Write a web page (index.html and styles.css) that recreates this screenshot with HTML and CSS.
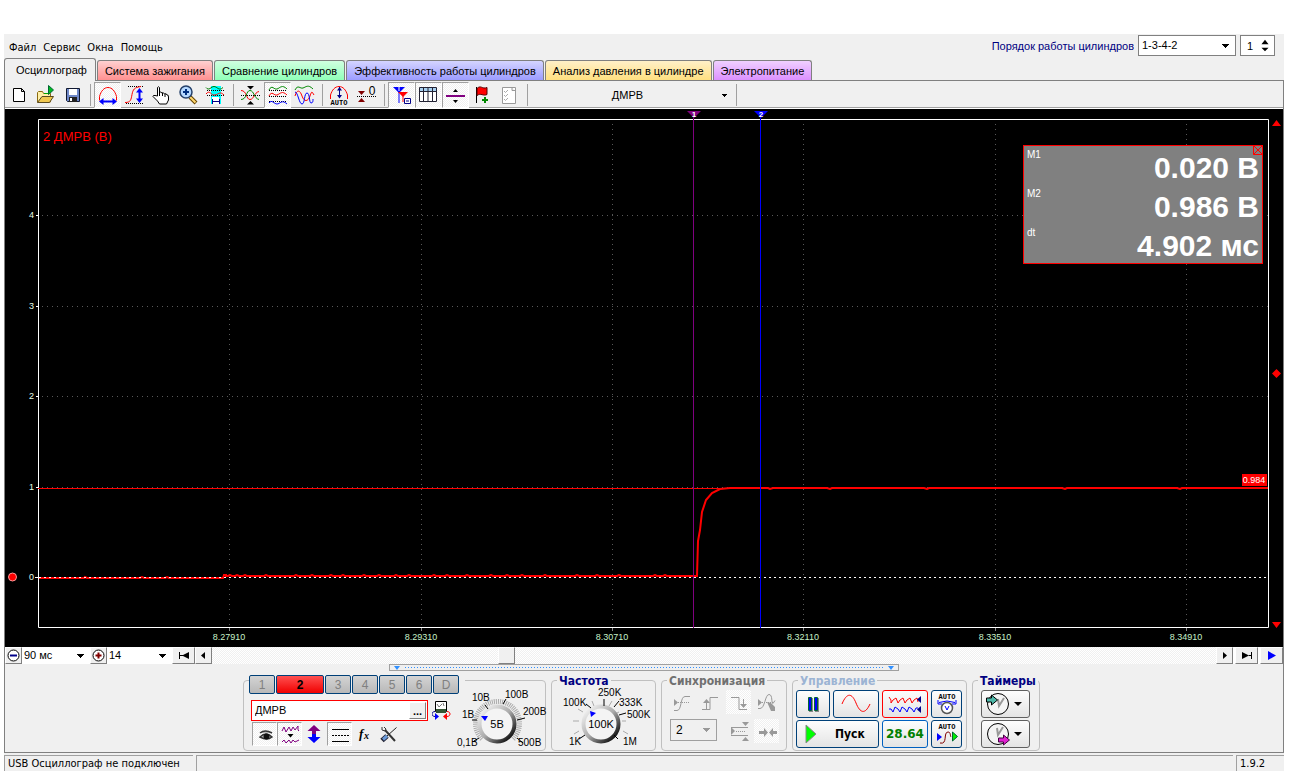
FILE: index.html
```html
<!DOCTYPE html>
<html lang="ru">
<head>
<meta charset="utf-8">
<title>USB Осциллограф</title>
<link rel="stylesheet" href="styles.css">
</head>
<body>
<main class="window">
  <header class="menubar">
    <nav class="menu">
      <button>Файл</button><button>Сервис</button><button>Окна</button><button>Помощь</button>
    </nav>
    <div class="order">
      <label for="order">Порядок работы цилиндров</label>
      <select id="order" class="order-select"><option>1-3-4-2</option></select>
      <div class="spin">
        <input type="text" value="1" aria-label="Номер цилиндра">
        <svg width="9" height="16" viewBox="0 0 9 16"><path d="M4.500 1 8.500 6H.5zM.5 10h8l-4 4z"/></svg>
      </div>
    </div>
  </header>

  <nav class="tabs">
    <button class="tab active">Осциллограф</button>
    <button class="tab red">Система зажигания</button>
    <button class="tab green">Сравнение цилиндров</button>
    <button class="tab blue">Эффективность работы цилиндров</button>
    <button class="tab yellow">Анализ давления в цилиндре</button>
    <button class="tab violet">Электропитание</button>
  </nav>

  <section class="page">
    <div class="toolbar">
      <button class="tool" aria-label="Новый"><svg viewBox="0 0 24 24"><path d="M6.500 5.500h8l3 3v10h-11zM14.500 5.500v3h3" fill="#fff" stroke="#000"/></svg></button>
      <button class="tool" aria-label="Открыть"><svg viewBox="0 0 24 24"><path d="M3.500 19V9.500l1-1h4l1 2h7V19z" fill="#fff0a8" stroke="#8a6a10"/><path d="M3.500 19.500 8 13.500h11.500l-4 6z" fill="#f0c850" stroke="#5a4a20"/><path d="M10 10.500h4" stroke="#0a0"/><path d="M14.500 2.500v9l5-4.500z" fill="#0b2" stroke="#063"/></svg></button>
      <button class="tool" aria-label="Сохранить"><svg viewBox="0 0 24 24"><path d="M5.500 5.500h13v13h-12l-1-1z" fill="#6f88c8" stroke="#101830"/><path d="M8 6h8v6H8z" fill="#fff"/><path d="M8 14h8v5H8z" fill="#222"/><path d="M9 15h2v3H9z" fill="#fff"/></svg></button>
      <i class="sep"></i>
      <button class="tool on" aria-label="Развертка"><svg viewBox="0 0 24 24" fill="none"><path d="M3.500 17.500v-4C5 8 8 4.500 12 4.500s7 3.500 8.500 9v4" stroke="red"/><path d="M5 18.500h14" stroke="#00f" stroke-width="2"/><path d="M7.500 15v7L3 18.500zM16.500 15v7l4.500-3.500z" fill="#00f"/></svg></button>
      <button class="tool" aria-label="Усиление"><svg viewBox="0 0 24 24" fill="none"><path d="M5 3.500h15M3 20.500h17" stroke="#000" stroke-dasharray="1 1"/><path d="M2 19.500c6 0 6-3 7-8s2-7 9-8" stroke="red"/><path d="M16.500 7v11" stroke="#00f" stroke-width="2"/><path d="M13 9.500h7L16.500 5zM13 15.500h7L16.500 20z" fill="#00f"/></svg></button>
      <button class="tool" aria-label="Рука"><svg viewBox="0 0 24 24"><path d="M7.500 13V4.500q1-1.500 2 0V10q1-2 2.500 0 1.500-1 2.500 1 2-1 2.500 1 1.500-.5 1.500 2v3l-2 4h-7l-2-3-4.500-4.500q0-1.500 2-1z" fill="#fff" stroke="#000"/><path d="M9.500 9v4M12.500 10v3M15 11v3" stroke="#000"/></svg></button>
      <button class="tool" aria-label="Лупа"><svg viewBox="0 0 24 24"><path d="m13 14 6 6" stroke="#664400" stroke-width="4"/><path d="m13 14 5.500 5.500" stroke="#ffd870" stroke-width="2"/><circle cx="9" cy="9" r="6" fill="#b4d8ff" stroke="#24406a" stroke-width="1.500"/><path d="M9 6v6M6 9h6" stroke="#003080" stroke-width="2"/></svg></button>
      <button class="tool" aria-label="Участок"><svg viewBox="0 0 24 24" fill="none"><path d="M7 3h10v18H7z" fill="#0ff"/><path d="M8 14h7v7H8z" fill="#fff"/><path d="M2 4.500c3 4 5-1 8-1s5 5 9 1" stroke="#007a00"/><path d="M3 7.500h18M3 12.500h18" stroke="#000" stroke-dasharray="1 1"/><path d="M2 11c4-5 5 2 9 1s5-4 9 0" stroke="red"/><path d="M8.500 16v5M15.500 16v5M9 18.500h7" stroke="#008"/></svg></button>
      <i class="sep"></i>
      <button class="tool" aria-label="Совместить"><svg viewBox="0 0 24 24" fill="none"><path d="M2 12.500h19" stroke="#000" stroke-dasharray="1 1"/><path d="M2 7.500c6 0 5 9 9 9s4-7 9-8" stroke="red"/><path d="M2 16.500c6 0 5-9 9-9s4 8 9 9" stroke="#080"/><path d="M8 3h7l-3.500 3.500zM8 21.500h7L11.500 18z" fill="#000"/></svg></button>
      <button class="tool on" aria-label="Разнести"><svg viewBox="0 0 24 24" fill="none"><path d="M3 7.500h18M3 13.500h18M3 18.500h18" stroke="#000" stroke-dasharray="1 1"/><path d="M3 7c3-6 5 0 8-1s5-5 10 0" stroke="#080"/><path d="M3 13c3-6 5 0 8-1s5-5 10 0" stroke="red"/><path d="M3 20c3-4 5 1 8 1s5-5 10 0" stroke="#00f"/></svg></button>
      <button class="tool" aria-label="Наложить"><svg viewBox="0 0 24 24" fill="none"><path d="M2 7c3-6 5-1 8-2s5-4 10 1" stroke="#080"/><path d="M2 13c2-7 5-6 7 0s6 6 8 0 2-4 4-1" stroke="red"/><path d="M2 9c3 0 4 12 7 12s2-11 5-11 2 10 4 10 2-2 2-4" stroke="#00f"/></svg></button>
      <i class="sep"></i>
      <button class="tool" aria-label="Авто"><svg viewBox="0 0 24 24" fill="none"><path d="M2.500 16v-4C4 7 7 3.500 11 3.500S18 7 19.500 12v4" stroke="red"/><path d="M11.500 4v11" stroke="#008"/><path d="M9 7.500h5L11.500 4zM9 12h5l-2.500 3.500z" fill="#008"/><text x="11" y="22" class="tiny">AUTO</text></svg></button>
      <button class="tool" aria-label="Ноль"><svg viewBox="0 0 24 24"><path d="M2 13.500h19" stroke="#000" stroke-dasharray="1 1"/><path d="M3 8h7l-3.500 4zM3 19h7l-3.500-4z" fill="#800000"/><text x="17" y="12" class="zero">0</text></svg></button>
      <i class="sep"></i>
      <button class="tool on" aria-label="Маркеры"><svg viewBox="0 0 24 24"><path d="M3 4h12l-6 6z" fill="#00f"/><path d="M9 9v11" stroke="#00f"/><path d="M8 9h10l-5 5z" fill="red"/><path d="M13 13v6" stroke="red"/><path d="M9 4v4" stroke="#fff"/><path d="M14.500 15.500h6v5h-6z" fill="#fff" stroke="#008"/><path d="M16 18h3" stroke="#008"/></svg></button>
      <button class="tool on" aria-label="Таблица"><svg viewBox="0 0 24 24"><path d="M2.500 4.500h17v14h-17z" fill="#fff" stroke="#223"/><path d="M3 5h16v4H3z" fill="#a8d0f0"/><path d="M3 8.500h16M6.500 5v13M11 5v13M15.500 5v13" stroke="#223"/></svg></button>
      <button class="tool on" aria-label="Линия"><svg viewBox="0 0 24 24"><path d="M2 12h19v2H2z" fill="#800080"/><path d="M9 9h5l-2.500-3zM9 17h5l-2.500 3z" fill="#000"/></svg></button>
      <button class="tool" aria-label="Флаг"><svg viewBox="0 0 24 24"><path d="M5.500 4v16" stroke="#000"/><path d="M6 5.500c4-4 5 1 10-1v7c-4 2-6-2-10 1z" fill="red" stroke="#500"/><path d="M14 14v6M11 17h6" stroke="#080" stroke-width="2"/></svg></button>
      <button class="tool" aria-label="Отчет"><svg viewBox="0 0 24 24"><path d="M4.500 4.500h13v16h-13zM14 4.500v3h3" fill="#fff" stroke="#999"/><path d="m6 8 1.500 1.500L10 7m-4 5 1.500 1.500L10 11m-4 5 1.500 1.500L10 15" fill="none" stroke="#aaa"/></svg></button>
      <i class="sep"></i>
      <select class="source" aria-label="Датчик"><option>ДМРВ</option></select>
      <i class="sep"></i>
    </div>

    <div class="scope">
      <svg class="plot" viewBox="5 109 1278 538">
        <g class="grid">
          <path d="M229.500 124v504M421.500 124v504M612.500 124v504M803.500 124v504M995.500 124v504M1186.500 124v504"/>
          <path d="M42 215.500h1226M42 306.500h1226M42 396.500h1226M42 487.500h1226"/>
        </g>
        <path class="frame" d="M38.500 119.500h1230v508h-1230zM36 215.500h3M36 306.500h3M36 396.500h3M36 487.500h3M35 577.500h4"/>
        <path d="M229.500 628v3M421.500 628v3M612.500 628v3M803.500 628v3M995.500 628v3M1186.500 628v3" stroke="#888"/>
        <path d="M38 488.500h1230" stroke="red"/>
        <path class="trace" d="M39 578h45l1-1 2 1h53l2-1 2 1h21l2-1 2 1h54l1-3h2v1h2l2-1 2 1h3l2-1 2 1h4l2-1 2 1h17l2-1 2 1h26l2-1 2 1h12l2-1 2 1h15l2-1 2 1h8l2-1 2 1h17l2-1 2 1h11l2-1 2 1h13l2-1 2 1h9l2-1 2 1h21l2-1 2 1h9l2-1 2 1h16l2-1 2 1h20l2-1 2 1h12l2-1 2 1h11l2-1 2 1h19l2-1 2 1h28l2-1 2 1h16l2-1 2 1h18l2-1 2 1h32l2-1 2 1h6l2-1 2 1H697L698 541l2-11 2-18 4-12 6-7 8-4 10-1h38l2 1 3-1h54l3 1 2-1h92l3 1 2-1h133l3 1 2-1h110l3 1 2-1H1268"/>
        <path d="M39 577.500h1229" stroke="#fff" stroke-dasharray="2 3"/>
        <path d="M693.500 112v516" stroke="#800080"/><path d="M687 111h14l-7 7z" fill="#800080"/>
        <path d="M760.500 112v516" stroke="#00f"/><path d="M754 111h14l-7 7z" fill="#00f"/>
        <text class="mark" x="694" y="117">1</text><text class="mark" x="761" y="117">2</text>
        <text class="channel" x="43" y="141">2 ДМРВ (В)</text>
        <g class="ylab"><text x="34" y="218">4</text><text x="34" y="309">3</text><text x="34" y="399">2</text><text x="34" y="490">1</text><text x="34" y="580">0</text></g>
        <g class="xlab"><text x="229" y="640">8.27910</text><text x="421" y="640">8.29310</text><text x="612" y="640">8.30710</text><text x="803" y="640">8.32110</text><text x="995" y="640">8.33510</text><text x="1186" y="640">8.34910</text></g>
        <path d="M1242 474h25v12h-25z" fill="red"/><text class="level" x="1254" y="483">0.984</text>
        <path d="M1272 126h9l-4.500-6zM1272 622h9l-4.500 6zM1272 373.500l4.500-4.500 4.500 4.500-4.500 4.500z" fill="red"/>
        <circle cx="12.500" cy="577" r="4" fill="red" stroke="#f99"/>
      </svg>
      <div class="readout">
        <button aria-label="Закрыть"><svg width="10" height="10" viewBox="0 0 10 10"><path d="M.5.5h9v9h-9zl9 9m0-9-9 9" fill="none" stroke="red"/></svg></button>
        <p><span>М1</span><b>0.020 В</b></p>
        <p><span>М2</span><b>0.986 В</b></p>
        <p><span>dt</span><b>4.902 мс</b></p>
      </div>
    </div>

    <div class="scroller">
      <button class="step" aria-label="Уменьшить"><svg width="13" height="13" viewBox="0 0 13 13"><circle cx="6.500" cy="6.500" r="5.500" fill="#fff" stroke="#000"/><path d="M3 5.500h7v2H3z" fill="#008"/></svg></button>
      <select class="zoom time" aria-label="Длительность"><option>90 мс</option></select>
      <button class="step" aria-label="Увеличить"><svg width="13" height="13" viewBox="0 0 13 13"><circle cx="6.500" cy="6.500" r="5.500" fill="#fff" stroke="#000"/><path d="M3.500 5.500h2v-2h2v2h2v2h-2v2h-2v-2h-2z" fill="#800000"/></svg></button>
      <select class="zoom gain" aria-label="Масштаб"><option>14</option></select>
      <button class="nav wide" aria-label="В начало"><svg width="12" height="9" viewBox="0 0 12 9"><path d="M1 1h1v7H1zM2 4h3v1H2zM4 4.500 11 1v7z"/></svg></button>
      <button class="nav" aria-label="Назад"><svg width="9" height="9" viewBox="0 0 9 9"><path d="M2 4.500 6 1v7z"/></svg></button>
      <div class="track"><button class="thumb" aria-label="Прокрутка"></button></div>
      <button class="nav" aria-label="Вперед"><svg width="9" height="9" viewBox="0 0 9 9"><path d="M7 4.500 3 1v7z"/></svg></button>
      <button class="nav wide end" aria-label="В конец"><svg width="12" height="9" viewBox="0 0 12 9"><path d="M10 1h1v7h-1zM7 4h3v1H7zM8 4.500 1 1v7z"/></svg></button>
      <button class="nav wide end" aria-label="Воспроизвести"><svg width="12" height="9" viewBox="0 0 12 9"><path d="M10 4.500 2 0v9z" fill="#00f"/></svg></button>
    </div>

    <button class="splitter" aria-label="Свернуть панель"><svg width="8" height="4" viewBox="0 0 8 4"><path d="M1 0h6L4 4z"/></svg><i></i><svg width="8" height="4" viewBox="0 0 8 4"><path d="M1 0h6L4 4z"/></svg></button>

    <div class="controls">
      <fieldset class="channels">
        <legend>
          <button class="ch">1</button><button class="ch cur">2</button><button class="ch">3</button><button class="ch">4</button><button class="ch">5</button><button class="ch">6</button><button class="ch">D</button>
        </legend>
        <div class="ch-body">
          <div class="sensor">
            <div class="name"><input type="text" value="ДМРВ" aria-label="Название канала"><button aria-label="Выбрать">...</button></div>
            <svg width="20" height="21" viewBox="0 0 20 21"><path d="M3.500 1.500h11v10h-11z" fill="#fff" stroke="#000"/><path d="M4 9h10v4H4z" fill="#353"/><path d="m5 4 2 3 3-3m1-1 1 3" stroke="#777" fill="none"/><path d="M3 11.500c-4 0-4 5 0 5h2" fill="none" stroke="#008"/><path d="M3 13v7l4-3.500z" fill="#00f"/><path d="M15 11.500c4 0 4 5 0 5h-2" fill="none" stroke="red"/><path d="M15 13v7l-4-3.500z" fill="red"/></svg>
          </div>
          <div class="ch-tools">
            <button class="mini on" aria-label="Видимость"><svg viewBox="0 0 24 24"><path d="M7 10q5-4 12 0M7 14q6-6 12 0-5 4-12 0z" fill="#bbb" stroke="#333" stroke-width="1.500"/><circle cx="13.500" cy="13.500" r="3" fill="#111"/></svg></button>
            <button class="mini on" aria-label="Фильтр"><svg viewBox="0 0 24 24" fill="none"><path d="m4 8 2-4 2 5 3-5 2 4 2-4 2 3 3-4v4l1 1M4 19l2-2 2 3 3-3 2 3 2-3 2 2 4-2" stroke="#800080"/><path d="M9.500 11h6l-3 3.500z" fill="#000"/></svg></button>
            <button class="mini" aria-label="Инверсия"><svg viewBox="0 0 24 24"><path d="m11 2 6.500 6H13v4H9V8H4.500z" fill="#800080"/><path d="m11 20 6.500-6H13v-3H9v3H4.500z" fill="#00f"/></svg></button>
            <button class="mini on" aria-label="Линии"><svg viewBox="0 0 24 24"><path d="M4 6.500h17M4 18.500h17" stroke="#000"/><path d="M4 12.500h17" stroke="#000" stroke-dasharray="2 1"/></svg></button>
            <button class="mini" aria-label="Функция"><svg viewBox="0 0 24 24"><text x="6" y="15" class="fx">f</text><text x="11" y="16" class="fxs">x</text></svg></button>
            <button class="mini" aria-label="Настройки"><svg viewBox="0 0 24 24"><path d="M18.500 4.500 9 13" stroke="#222"/><path d="M4 17.500 9 13" stroke="#223" stroke-width="5"/><path d="m5 16.500 4-3.500" stroke="#6a9ad8" stroke-width="3"/><path d="m7 7 10 11" stroke="#333" stroke-width="2"/><path d="M4 4v3l3 1 1-2-2-2" fill="none" stroke="#333"/></svg></button>
          </div>
        </div>
        <svg class="dial" width="92" height="66" viewBox="454 684 92 66">
          <defs><linearGradient id="rim" x1="0" y1="0" x2="1" y2="1"><stop offset="0" stop-color="#fff"/><stop offset=".5" stop-color="#aaa"/><stop offset=".9" stop-color="#111"/></linearGradient></defs>
          <path d="M483 739a22 22 0 1 1 31 0" class="ticks"/>
          <circle cx="498" cy="724" r="17.500" class="knob"/>
          <path d="m486 705 3 4m15-5 3-5M473 720h5m2 18-5 3m43-21 8-2m-8 20 6 5" stroke="#000"/>
          <path d="M482 716h7l-3 5z" fill="#00f"/>
          <g class="scale"><text x="473" y="701">10В</text><text x="506" y="698">100В</text><text x="463" y="718">1В</text><text x="524" y="715">200В</text><text x="458" y="746">0,1В</text><text x="519" y="746">500В</text></g>
          <text x="498" y="728" class="value">5В</text>
        </svg>
      </fieldset>

      <fieldset class="freq"><legend>Частота</legend>
        <svg class="dial" width="102" height="66" viewBox="553 684 102 66">
          <path d="m593 701 2 5m18-5-3 5m13 15h4m-53 0h6m-1-12 5 3m36 0-4 2m8 17 5 3m-49-3-5 3" stroke="#aaa"/>
          <circle cx="602" cy="724" r="17.500" class="knob"/>
          <path d="m587 704 5 4m13-9v7m10 1 5-6m0 14 7-2m-12 22 4 4m-33-4-6 4" stroke="#000"/>
          <path d="m591 711 6 2-5 4z" fill="#00f"/>
          <g class="scale"><text x="599" y="696">250K</text><text x="564" y="706">100K</text><text x="620" y="706">333K</text><text x="628" y="718">500K</text><text x="570" y="745">1K</text><text x="624" y="745">1M</text></g>
          <text x="602" y="728" class="value">100K</text>
        </svg>
      </fieldset>

      <fieldset class="sync" disabled><legend>Синхронизация</legend>
        <div class="sync-grid">
          <button class="mini" aria-label="Уровень"><svg viewBox="0 0 24 24"><path d="M3 8v7l4-3.500z" fill="#999"/><path d="M7 11.500h12" stroke="#999" stroke-dasharray="1 1"/><path d="M3 19.500h3c5 0 3-14 8-14h5" class="gs"/></svg></button>
          <button class="mini" aria-label="Фронт"><svg viewBox="0 0 24 24"><path d="M4 18.500h8v-12h8M8.500 9v9" class="gs"/><path d="M5 12h7L8.500 8z" fill="#999"/></svg></button>
          <button class="mini on" aria-label="Спад"><svg viewBox="0 0 24 24"><path d="M4 6.500h8v12h8M16.500 8v6" class="gs"/><path d="M13 13h7l-3.500 4z" fill="#999"/></svg></button>
          <button class="mini" aria-label="Вручную"><svg viewBox="0 0 24 24"><path d="M3 8v7l4-3.500zM12 11l4 1 4 4v4h-4z" fill="#999"/><path d="M7 11.500h12" stroke="#999" stroke-dasharray="1 1"/><path d="M3 17.500h2c5 0 5-14 9-14 4 0 2 9 4 9l2-3" class="gs"/></svg></button>
          <select aria-label="Канал синхронизации"><option>2</option></select>
          <button class="mini" aria-label="Окно"><svg viewBox="0 0 24 24"><path d="M4 7v8l4-4zM15 2h7l-3.500 4zM15 21h7l-3.500-4z" fill="#999"/><path d="M4 7.500h17M4 15.500h17" class="gs"/><path d="M9 11.500h10" stroke="#999" stroke-dasharray="1 1"/></svg></button>
          <button class="mini on" aria-label="Центр"><svg viewBox="0 0 24 24"><path d="M4 11h5V8l4 4.500L9 17v-3H4zM22 11h-4V8l-4 4.500 4 4.500v-3h4z" fill="#999"/></svg></button>
        </div>
      </fieldset>

      <fieldset class="run"><legend>Управление</legend>
        <div class="run-grid">
          <button class="key" aria-label="Пауза"><svg width="14" height="18" viewBox="0 0 14 18"><path d="M3 3h4v14H3zM9 3h4v14H9z" fill="#888"/><path d="M2.500 2.500h3v13h-3zM8.500 2.500h3v13h-3z" fill="#00f" stroke="#063"/></svg></button>
          <button class="key" aria-label="Синус"><svg width="30" height="22" viewBox="0 0 30 22"><path d="M1 11c5-12 10-11 14-1s9 12 14 1" fill="none" stroke="red"/></svg></button>
          <button class="key hot" aria-label="Сигналы"><svg width="34" height="20" viewBox="0 0 34 20" fill="none"><path d="m1 3 2 3v3l2-3 3-2 2 5 2-3 3-2 2 5 2-3 3-2 2 5 2-3 3-2 1 4" stroke="red"/><path d="M1 15h2l2 3 2-5 3 2 2 3 2-5 3 2 2 3 2-5 3 2 2 3 2-4h2" stroke="#00f"/><path d="M33 2v7l-4-3.500zM33 12v7l-4-3.500z" fill="#008"/></svg></button>
          <button class="key" aria-label="Авто настройка"><svg width="26" height="24" viewBox="0 0 26 24"><text x="13" y="7" class="tiny">AUTO</text><path d="M5 10.500q8-3 16 0M4 8v4h4M22 8v4h-4" fill="none" stroke="#00f"/><circle cx="13" cy="16" r="5.500" fill="#fff" stroke="#555" stroke-width="1.500"/><path d="m11 14 2 4 2-4" fill="none" stroke="#00f"/></svg></button>
          <button class="key go"><svg width="12" height="20" viewBox="0 0 12 20"><path d="M1 1v18l10-9z" fill="#0f0" stroke="#888"/></svg><span>Пуск</span></button>
          <button class="key meter">28.64</button>
          <button class="key" aria-label="Авто пуск"><svg width="26" height="24" viewBox="0 0 26 24"><text x="13" y="7" class="tiny">AUTO</text><path d="M3 11v8l5-4z" fill="#00f"/><path d="M6 21c8 2 3-11 8-11 3 0 2 4 3 5" fill="none" stroke="#800000"/><path d="M18.500 10v9l5-4.500z" fill="#0e0" stroke="#063"/></svg></button>
        </div>
      </fieldset>

      <fieldset class="timers"><legend>Таймеры</legend>
        <button class="key timer" aria-label="Таймер начала"><svg width="26" height="26" viewBox="0 0 26 26"><circle cx="14" cy="13" r="10.500" fill="#f4f4f4" stroke="#000"/><path d="m14 8 1 7 5-8" fill="none" stroke="#999" stroke-width="2"/><path d="M2.500 7h5V4l6 5-6 5v-3h-5z" fill="#4db8a8" stroke="#000"/></svg><i></i></button>
        <button class="key timer" aria-label="Таймер конца"><svg width="26" height="26" viewBox="0 0 26 26"><circle cx="14" cy="13" r="10.500" fill="#f4f4f4" stroke="#000"/><path d="m13 7 1 7 5-8" fill="none" stroke="#999" stroke-width="2"/><path d="M14.500 17h5v-3l6 5-6 5v-3h-5z" fill="#e020d0" stroke="#400040"/></svg><i></i></button>
      </fieldset>
    </div>
  </section>

  <footer class="status"><span class="st-main">USB Осциллограф не подключен</span><span class="st-fill"></span><span class="st-ver">1.9.2</span></footer>
</main>
</body>
</html>
```
FILE: styles.css
```css
* { box-sizing: border-box; }
body {
  margin: 0;
  padding: 34px 12px 0 4px;
  background: #fff;
  color: #000;
  font: 11px/14px "Liberation Sans", Arial, sans-serif;
}
button, input, select { font: inherit; color: inherit; margin: 0; padding: 0; border: 0; border-radius: 0; background: none; }
svg { display: block; }
select { appearance: none; }
.window { background: #f0f0f0; }

.menubar { display: flex; justify-content: space-between; height: 24px; padding: 0 9px 1px 5px; }
.menu { display: flex; gap: 7px; align-items: center; padding-top: 4px; font-family: "DejaVu Sans Condensed", "DejaVu Sans", sans-serif; }
.order { display: flex; align-items: center; gap: 4px; }
.order label { color: #000080; }
.order-select, .zoom, .source, .sync select {
  background-repeat: no-repeat;
  background-image: linear-gradient(#000, #000), linear-gradient(#000, #000), linear-gradient(#000, #000), linear-gradient(#000, #000);
  background-size: 7px 1px, 5px 1px, 3px 1px, 1px 1px;
  background-position: right 6px top 8px, right 7px top 9px, right 8px top 10px, right 9px top 11px;
}
.order-select { width: 98px; height: 21px; padding: 0 3px 2px; border: 1px solid #808080; background-color: #fff; }
.spin { display: flex; align-items: center; width: 35px; height: 21px; padding: 0 5px 0 6px; border: 1px solid #808080; background: #fff; }
.spin input { width: 14px; }

.tabs { display: flex; align-items: flex-end; gap: 1px; height: 22px; }
.tab { height: 20px; padding: 0 7px; border: 1px solid #808080; border-bottom: 0; border-radius: 3px 3px 0 0; white-space: nowrap; }
.tab.active { position: relative; height: 23px; margin-bottom: -1px; padding: 0 8px 1px 11px; background: #f0f0f0; }
.tab.red { background: linear-gradient(#ffd0d0, #ff9090); }
.tab.green { background: linear-gradient(#d0ffe0, #90ffb8); }
.tab.blue { background: linear-gradient(#d4d4ff, #9c9cff); }
.tab.yellow { background: linear-gradient(#fff0c8, #ffe080); }
.tab.violet { background: linear-gradient(#f0d0ff, #dc90ff); }

.page { border: 1px solid #808080; }
.toolbar { display: flex; align-items: center; height: 28px; border-bottom: 1px solid #fff; box-shadow: inset 0 -1px #a0a0a0; }
.tool { width: 27px; height: 26px; border: 1px solid transparent; display: flex; justify-content: center; }
.tool svg, .mini svg { width: 24px; height: 24px; flex: none; }
.tool.on, .mini.on { border-color: #a0a0a0 #fff #fff #a0a0a0; background: repeating-conic-gradient(#fff 0 25%, #f0f0f0 0 50%) 0 0 / 2px 2px; }
.sep { width: 1px; height: 22px; margin: 0 3px 0 4px; background: #a0a0a0; }
.source { width: 201px; height: 24px; padding-right: 8px; text-align-last: center; background-position: right 5px top 11px, right 6px top 12px, right 7px top 13px, right 8px top 14px; background-size: 5px 1px, 3px 1px, 1px 1px, 0 0; }
.tiny { font: bold 7px "Liberation Mono", monospace; text-anchor: middle; fill: #000; }
.zero { font: 12px "Liberation Sans", sans-serif; text-anchor: middle; }

.scope { position: relative; background: #000; }
.plot { width: 100%; height: auto; font-family: "Liberation Sans", Arial, sans-serif; }
.grid { stroke: #585858; stroke-dasharray: 1 4; }
.frame { fill: none; stroke: #fff; }
.trace { fill: none; stroke: red; stroke-width: 2; }
.mark { fill: #fff; font-size: 8px; font-weight: bold; text-anchor: middle; }
.channel { fill: red; font-size: 13px; }
.ylab, .xlab { fill: #e8ffe8; font-size: 9px; text-anchor: end; }
.xlab { text-anchor: middle; fill: #c8f0c8; }
.level { fill: #fff; font-size: 9px; text-anchor: middle; }
.readout { position: absolute; top: 36px; right: 20px; width: 240px; border: 1px solid red; background: #808080; color: #fff; }
.readout p { display: flex; justify-content: space-between; height: 39px; margin: 0; padding: 2px 3px 0 3px; font-size: 10px; }
.readout b { font-size: 30px; line-height: 39px; }
.readout button { position: absolute; top: -1px; right: -1px; }

.scroller { display: flex; height: 17px; background: #fff; }
.step, .nav, .thumb { display: grid; place-items: center; width: 17px; background: #f0f0f0; border: 1px solid; border-color: #fff #808080 #808080 #fff; }
.nav.wide { width: 23px; }
.nav.end { margin-left: 2px; }
.zoom { padding: 0 0 1px 2px; background-position: right 6px top 7px, right 7px top 8px, right 8px top 9px, right 9px top 10px; background-color: #fff; }
.time { width: 68px; }
.gain { width: 65px; }
.track { flex: 1; display: grid; grid-template-columns: 286fr 17px 702fr; background: repeating-conic-gradient(#fff 0 25%, #f0f0f0 0 50%) 0 0 / 2px 2px; }
.thumb { grid-column: 2; height: 17px; }

.splitter { display: flex; align-items: center; gap: 4px; width: 510px; height: 7px; margin: 0 auto; padding: 0 3px; border: 1px solid #a0a0a0; }
.splitter svg { fill: #3090ff; }
.splitter i { flex: 1; height: 1px; background: repeating-linear-gradient(90deg, #3090ff 0 1px, transparent 1px 3px); }

.controls { display: flex; justify-content: center; gap: 5px; height: 81px; padding: 3px 5px 0 0; }
fieldset { min-width: 0; margin: 0; padding: 0; height: 77px; border: 1px solid #c0c0c0; border-radius: 4px; }
legend { height: 12px; margin-left: 5px; padding: 0 2px; font: bold 12px/14px "DejaVu Sans Condensed", "DejaVu Sans", sans-serif; color: #000080; }
.channels { width: 303px; display: flex; }
.channels legend { display: flex; gap: 1px; padding: 1px 6px 0 0; }
.ch { flex: none; width: 26px; height: 19px; border: 1px solid #004078; border-radius: 2px; background: linear-gradient(#d4d4d4, #b8b8b8); color: #808080; font: 12px "Liberation Sans", sans-serif; }
.ch.cur { width: 48px; background: linear-gradient(#ff5050, #f00000); color: #000; font-weight: bold; }
.ch-body { width: 209px; padding: 14px 0 0 7px; }
.sensor { display: flex; gap: 4px; }
.name { display: flex; width: 177px; height: 21px; border: 1px solid red; background: #fff; }
.name input { flex: 1; min-width: 0; padding: 0 0 2px 3px; }
.name button { width: 17px; margin: 1px; border: 1px solid; border-color: #fff #808080 #808080 #fff; background: #f0f0f0; line-height: 8px; font-weight: bold; }
.ch-tools { display: flex; padding: 1px 0 0 1px; }
.mini { display: grid; place-items: center; width: 25px; height: 24px; border: 1px solid transparent; }
.fx { font: italic bold 13px "Liberation Serif", serif; }
.fxs { font: italic bold 10px "Liberation Serif", serif; }
.dial { margin-top: -2px; overflow: visible; font-family: "Liberation Sans", sans-serif; }
.ticks { fill: none; stroke: #aaa; stroke-width: 5; stroke-dasharray: 1 1; }
.knob { fill: #f4f4f4; stroke: url(#rim); stroke-width: 4; }
.scale { font-size: 10px; }
.value { font-size: 11px; text-anchor: middle; }
.freq { width: 105px; }
.sync { width: 126px; color: #808080; }
.sync legend { color: #707070; }
.sync-grid { display: grid; grid-template-columns: 27px 29px 28px 25px; gap: 5px 0; padding: 4px 0 0 8px; }
.sync select { grid-column: span 2; width: 47px; height: 22px; padding-left: 5px; border: 1px solid #a0a0a0; color: #000; opacity: 1; font-size: 12px; background-image: linear-gradient(#999, #999), linear-gradient(#999, #999), linear-gradient(#999, #999), linear-gradient(#999, #999); }
.sync .on { border-color: transparent; }
.gs { fill: none; stroke: #999; }
.run { width: 175px; }
.run legend { color: #9cb4d4; }
.run-grid { display: grid; grid-template-columns: 34px 46px 46px 31px; grid-template-rows: 28px 28px; gap: 2px 3px; padding: 4px 0 0 3px; }
.key { display: grid; place-items: center; border: 1px solid #004078; border-radius: 3px; background: linear-gradient(#fdfdfd, #e4e4e4); }
.key.hot { border-color: red; }
.go { grid-column: span 2; display: flex; align-items: center; gap: 18px; padding-left: 8px; font: bold 12px "DejaVu Sans Condensed", sans-serif; }
.meter { border-color: #0060c0; color: #008000; font: bold 12px "DejaVu Sans", sans-serif; }
.timers { width: 68px; }
.timers .timer { display: flex; align-items: center; gap: 4px; width: 49px; height: 28px; margin: 4px 0 0 8px; padding-left: 2px; border-color: #606060; }
.timers .timer + .timer { margin-top: 2px; }
.timer i { border: 4px solid transparent; border-top-color: #000; border-bottom: 0; }

.status { display: flex; gap: 3px; padding-top: 2px; height: 18px; font: 11px/16px "DejaVu Sans Condensed", "DejaVu Sans", sans-serif; }
.status span { border: 1px solid #a0a0a0; border-width: 1px 0 0 1px; padding-left: 3px; }
.st-main { width: 189px; white-space: nowrap; }
.st-fill { flex: 1; }
.st-ver { width: 48px; }
```
